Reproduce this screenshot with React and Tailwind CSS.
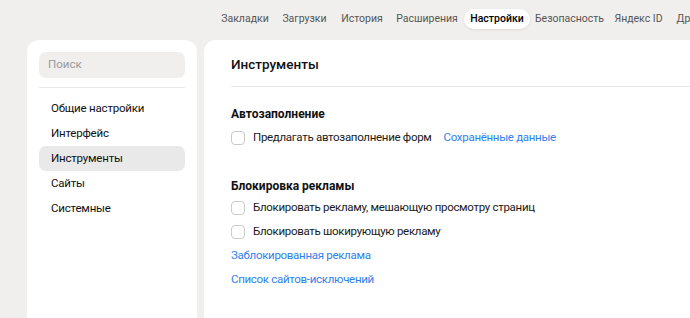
import { useState } from 'react';

const tabs = [
  { label: 'Закладки', w: 'w-[60px]' },
  { label: 'Загрузки', w: 'w-[59px]' },
  { label: 'История', w: 'w-[56px]' },
  { label: 'Расширения', w: 'w-[74px]' },
  { label: 'Настройки', w: 'w-[66px]' },
  { label: 'Безопасность', w: 'w-[79px]' },
  { label: 'Яндекс ID', w: 'w-[59px]' },
  { label: 'Другие устройства', w: 'w-[110px]' },
];
const menu = ['Общие настройки', 'Интерфейс', 'Инструменты', 'Сайты', 'Системные'];

function Checkbox({ label }) {
  return (
    <label className="flex items-center h-[24px]">
      <span className="w-[14px] h-[14px] rounded-[4px] border border-[#c9c9c9] bg-white shrink-0" />
      <span className="ml-[8px] text-[11.5px] tracking-[-0.3px] text-[#1a1a1a]">{label}</span>
    </label>
  );
}

export default function App() {
  const [active] = useState('Настройки');

  return (
    <div className="w-[690px] h-[318px] overflow-hidden bg-[#f0efed] font-['Roboto',sans-serif]">
      {/* top tabs */}
      <div className="flex items-center h-[38px] pl-[215px] whitespace-nowrap overflow-hidden">
        {tabs.map((t) => (
          <div
            key={t.label}
            className={`${t.w} h-[20px] shrink-0 flex items-center justify-center rounded-full text-[10.5px] ${
              t.label === active ? 'bg-white text-black font-medium shadow-[0_1px_3px_rgba(0,0,0,0.08)]' : 'text-[#555]'
            }`}
          >
            {t.label}
          </div>
        ))}
      </div>

      <div className="flex gap-[7px] pl-[27px] pt-[2px]">
        {/* sidebar */}
        <div className="w-[170px] h-[290px] bg-white rounded-[12px] px-[12px] pt-[12px]">
          <div className="h-[26px] rounded-[7px] bg-[#f0efed] flex items-center px-[9px] text-[11.5px] text-[#9a9a9a]">
            Поиск
          </div>
          <div className="h-px bg-[#e6e6e6] mt-[9px] mb-[8px]" />
          <div className="flex flex-col">
            {menu.map((m) => (
              <div
                key={m}
                className={`h-[25px] flex items-center px-[12px] rounded-[7px] text-[11.5px] tracking-[-0.2px] text-[#111] ${
                  m === 'Инструменты' ? 'bg-[#e9e9e9]' : ''
                }`}
              >
                {m}
              </div>
            ))}
          </div>
        </div>

        {/* main */}
        <div className="flex-1 h-[290px] bg-white rounded-tl-[12px] pl-[27px]">
          <div className="h-[46px] flex items-center text-[13.5px] font-medium text-[#111] pt-[3px]">
            Инструменты
          </div>
          <div className="h-px bg-[#e6e6e6]" />

          <div className="pt-[17px]">
            <div className="text-[12px] font-bold text-[#111] h-[20px] flex items-center">Автозаполнение</div>
            <div className="flex items-center mt-[2px]">
              <Checkbox label="Предлагать автозаполнение форм" />
              <a className="ml-[12px] text-[11.5px] tracking-[-0.3px] text-[#2f80ed]">Сохранённые данные</a>
            </div>
          </div>

          <div className="pt-[26px]">
            <div className="text-[12px] font-bold text-[#111] h-[20px] flex items-center">Блокировка рекламы</div>
            <div>
              <Checkbox label="Блокировать рекламу, мешающую просмотру страниц" />
              <Checkbox label="Блокировать шокирующую рекламу" />
            </div>
            <div className="h-[24px] flex items-center text-[11.5px] tracking-[-0.3px] text-[#2f80ed]">Заблокированная реклама</div>
            <div className="h-[23px] flex items-center text-[11.5px] tracking-[-0.3px] text-[#2f80ed]">Список сайтов-исключений</div>
          </div>
        </div>
      </div>
    </div>
  );
}
